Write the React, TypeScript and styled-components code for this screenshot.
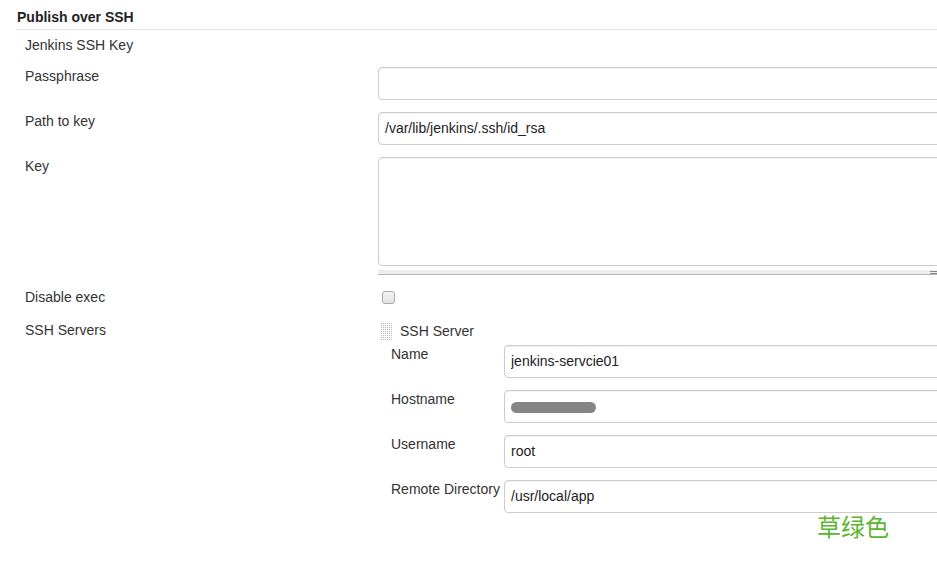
import React from "react";
import styled, { createGlobalStyle } from "styled-components";

const GlobalStyle = createGlobalStyle`
	html, body {
		margin: 0;
		padding: 0;
		background: #fff;
		overflow: hidden;
	}
	body {
		font-family: "Liberation Sans", Arial, Helvetica, sans-serif;
		font-size: 14px;
		color: #333;
	}
`;

const Page = styled.div`
	position: relative;
	width: 925px;
	height: 562px;
	padding-left: 17px;
`;

const Header = styled.div`
	padding-top: 7px;
	padding-bottom: 2px;
	line-height: 20px;
	font-weight: bold;
	color: #222;
	border-bottom: 1px solid #e3e3e3;
`;

const Section = styled.div`
	display: grid;
	grid-template-columns: 353px 1fr;
	row-gap: 10px;
	padding: 5px 0 0 8px;
`;

const Label = styled.div<{ $minHeight?: number; $pt?: number }>`
	line-height: 20px;
	padding-top: ${(p) => p.$pt ?? 1}px;
	min-height: ${(p) => p.$minHeight || 20}px;
	white-space: nowrap;
`;

const FullRow = styled(Label)`
	grid-column: 1 / span 2;
`;

const Cell = styled.div`
	min-width: 0;
`;

const Input = styled.input`
	display: block;
	box-sizing: border-box;
	width: 100%;
	height: 33px;
	margin-top: 2px;
	padding: 0 6px 2px;
	border: 1px solid #ccc;
	border-radius: 4px;
	box-shadow: inset 0 1px 1px rgba(0, 0, 0, 0.06);
	font-family: "Liberation Sans", Arial, sans-serif;
	font-size: 14px;
	color: #222;
	background: #fff;
	outline: none;
`;

const FakeInput = styled.div`
	display: flex;
	align-items: center;
	box-sizing: border-box;
	width: 100%;
	height: 33px;
	margin-top: 2px;
	padding: 0 6px;
	border: 1px solid #ccc;
	border-radius: 4px;
	box-shadow: inset 0 1px 1px rgba(0, 0, 0, 0.06);
`;

const Blur = styled.span`
	display: block;
	width: 85px;
	height: 11px;
	margin-top: 1px;
	border-radius: 6px;
	background: #858585;
	filter: blur(0.4px);
`;

const TextArea = styled.textarea`
	display: block;
	box-sizing: border-box;
	width: 100%;
	height: 109px;
	margin: 2px 0 0;
	padding: 6px;
	border: 1px solid #ccc;
	border-radius: 4px;
	box-shadow: inset 0 1px 1px rgba(0, 0, 0, 0.06);
	resize: none;
	outline: none;
`;

const ResizeBar = styled.div`
	position: relative;
	height: 4px;
	margin-top: 4px;
	background: #eee;
	border-bottom: 1px solid #b5b5b5;

	&::after {
		content: "";
		position: absolute;
		right: 2px;
		top: 1px;
		width: 10px;
		height: 1px;
		border-top: 1px solid #888;
		border-bottom: 1px solid #888;
	}
`;

const CheckBox = styled.span`
	display: block;
	box-sizing: border-box;
	width: 13px;
	height: 13px;
	margin: 6px 0 0 4px;
	border: 1px solid #aaa;
	border-radius: 3px;
	background: linear-gradient(#f4f4f4, #e2e2e2);
`;

const ServerHead = styled.div`
	display: flex;
	align-items: center;
	gap: 7px;
	padding-left: 3px;
	line-height: 20px;
	margin-top: 2px;
`;

const ServerGrid = styled.div`
	display: grid;
	grid-template-columns: 113px 1fr;
	row-gap: 10px;
	margin-top: 2px;
	padding-left: 13px;
`;

const Annotation = styled.div`
	position: absolute;
	left: 817px;
	top: 514px;
	font-family: "Noto Sans CJK SC", "Noto Sans", sans-serif;
	font-size: 24px;
	line-height: 24px;
	color: #5cb52e;
`;

const Grip = () => (
	<svg width="12" height="17" viewBox="0 0 12 17">
		{Array.from({ length: 9 }).map((_, r) =>
			Array.from({ length: 6 }).map((_, c) => (
				<rect key={`${r}-${c}`} x={c * 2} y={r * 2} width="1" height="1" fill="#b8b8b8" />
			))
		)}
	</svg>
);

const servers = [
	{ label: "Name", value: "jenkins-servcie01" },
	{ label: "Hostname", value: null },
	{ label: "Username", value: "root" },
	{ label: "Remote Directory", value: "/usr/local/app" },
];

const App = () => {
	return (
		<Page>
			<GlobalStyle />
			<Header>Publish over SSH</Header>
			<Section>
				<FullRow $pt={0}>Jenkins SSH Key</FullRow>

				<Label>Passphrase</Label>
				<Cell>
					<Input type="password" defaultValue="" />
				</Cell>

				<Label>Path to key</Label>
				<Cell>
					<Input defaultValue="/var/lib/jenkins/.ssh/id_rsa" />
				</Cell>

				<Label>Key</Label>
				<Cell>
					<TextArea defaultValue="" />
					<ResizeBar />
				</Cell>

				<Label $pt={2} $minHeight={22}>Disable exec</Label>
				<Cell>
					<CheckBox />
				</Cell>

				<Label>SSH Servers</Label>
				<Cell>
					<ServerHead>
						<Grip />
						<span>SSH Server</span>
					</ServerHead>
					<ServerGrid>
						{servers.map((s) => (
							<React.Fragment key={s.label}>
								<Label>{s.label}</Label>
								<Cell>
									{s.value === null ? (
										<FakeInput>
											<Blur />
										</FakeInput>
									) : (
										<Input defaultValue={s.value} />
									)}
								</Cell>
							</React.Fragment>
						))}
					</ServerGrid>
				</Cell>
			</Section>
			<Annotation>草绿色</Annotation>
		</Page>
	);
};

export default App;
